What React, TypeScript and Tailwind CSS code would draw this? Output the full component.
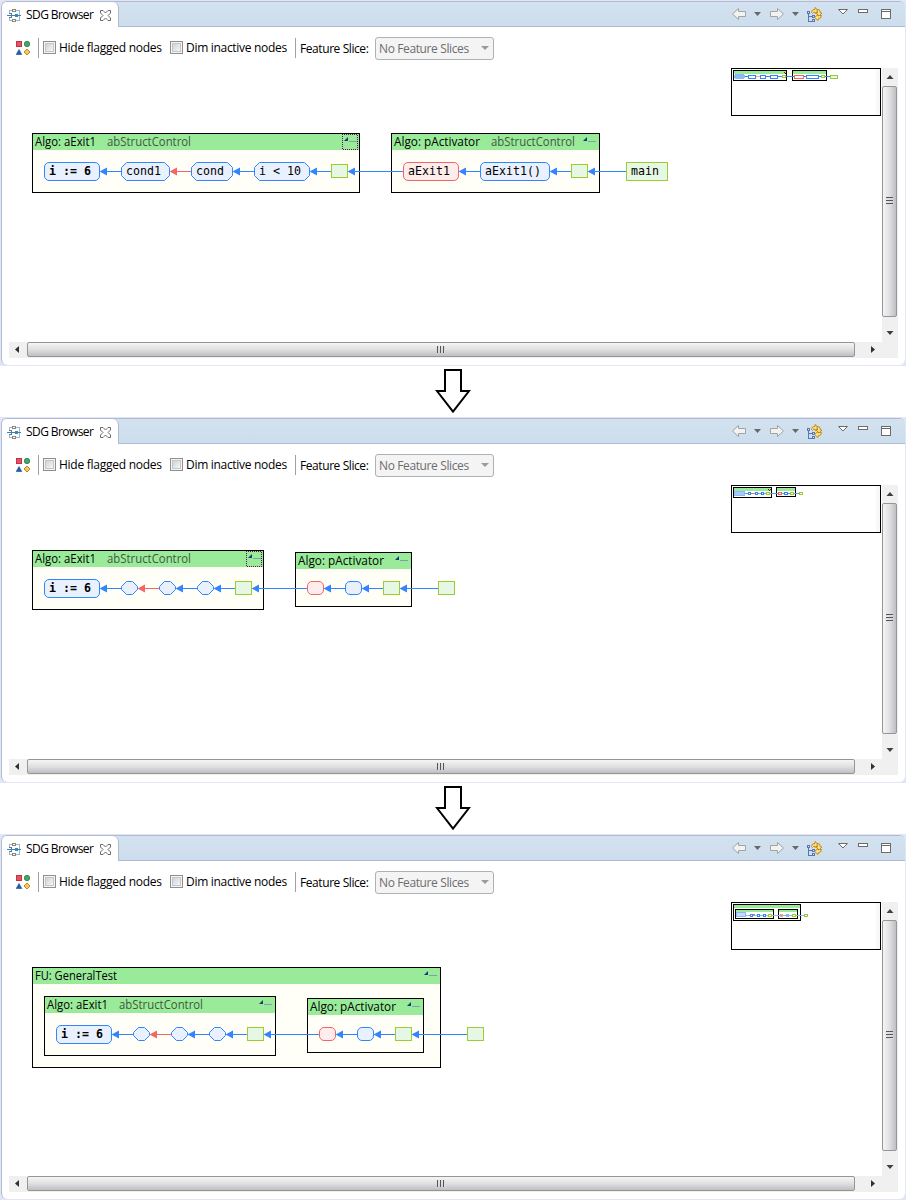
import React from "react";

type Kind = "blue" | "oct" | "red" | "green";
interface NodeDef {
  kind: Kind;
  x: number;
  w: number;
  label?: string;
  bold?: boolean;
}
interface GroupDef {
  x: number;
  y: number;
  w: number;
  h: number;
  title: string;
  titleW: number;
  sub?: boolean;
  focused?: string;
}
interface Scene {
  cy: number;
  groups: GroupDef[];
  nodes: NodeDef[];
  mini: React.ReactNode;
}

const BLUE = "#3385ff";
const RED = "#f26666";
const GREEN = "#9acd32";
const fills = { blue: "#e9f1fe", oct: "#e9f1fe", red: "#ffeced", green: "#e6f8e4" };
const strokes = { blue: BLUE, oct: BLUE, red: RED, green: GREEN };

function Shape({ n, cy }: { n: NodeDef; cy: number }) {
  const h = n.label ? 19 : 14;
  const top = n.label ? cy - 9 : cy - 7;
  const x0 = n.x + 0.5;
  const y0 = top + 0.5;
  const x1 = n.x + n.w - 0.5;
  const y1 = top + h - 0.5;
  const c = 5;
  const paint = { fill: fills[n.kind], stroke: strokes[n.kind] };
  return (
    <g>
      {n.kind === "oct" ? (
        <polygon
          {...paint}
          points={`${x0 + c},${y0} ${x1 - c},${y0} ${x1},${y0 + c} ${x1},${y1 - c} ${x1 - c},${y1} ${x0 + c},${y1} ${x0},${y1 - c} ${x0},${y0 + c}`}
        />
      ) : (
        <rect {...paint} x={x0} y={y0} width={n.w - 1} height={h - 1} rx={n.kind === "green" ? 0 : 4.5} />
      )}
      {n.label && (
        <text
          x={n.x + 5}
          y={cy + 4}
          fontSize={11.6}
          textLength={n.label.length * 7}
          xmlSpace="preserve"
          className={n.bold ? "font-['DejaVu_Sans_Mono',monospace] font-bold" : "font-['DejaVu_Sans_Mono',monospace]"}
        >
          {n.label}
        </text>
      )}
    </g>
  );
}

function Edge({ from, to, cy, color }: { from: number; to: number; cy: number; color: string }) {
  return (
    <g fill={color}>
      <rect x={to + 5} y={cy} width={from - to - 5} height={1} />
      <polygon points={`${to - 0.5},${cy + 0.5} ${to + 7},${cy - 3.4} ${to + 7},${cy + 4.4}`} />
    </g>
  );
}

function Group({ g }: { g: GroupDef }) {
  const r = g.x + g.w;
  const ix = g.focused ? r - 16 : r - 17;
  return (
    <g>
      <rect x={g.x + 0.5} y={g.y + 0.5} width={g.w - 1} height={g.h - 1} fill="#fffff7" stroke="#000" />
      <rect x={g.x + 1} y={g.y + 1} width={g.w - 2} height={16} fill="#99eb99" />
      <text x={g.x + 3} y={g.y + 13} fontSize={12} textLength={g.titleW} lengthAdjust="spacingAndGlyphs">
        {g.title}
      </text>
      {g.sub && (
        <text x={g.x + g.titleW + 14} y={g.y + 13} fontSize={12} fill="#435543" textLength={84} lengthAdjust="spacingAndGlyphs">
          abStructControl
        </text>
      )}
      <polygon points={`${ix},${g.y + 8} ${ix + 4},${g.y + 4} ${ix + 4},${g.y + 8}`} fill="#163b78" />
      <rect x={ix + 5} y={g.y + 8} width={8} height={1} fill="#7f9fb3" />
      {g.focused && (
        <rect
          x={r - 17.5}
          y={g.y + 1.5}
          width={15}
          height={15}
          fill="none"
          stroke={g.focused}
          strokeDasharray="1 1"
          strokeDashoffset={0.5}
          shapeRendering="crispEdges"
        />
      )}
    </g>
  );
}

function Diagram({ scene }: { scene: Scene }) {
  const { cy, nodes, groups, mini } = scene;
  return (
    <svg viewBox="9 68 873 274" className="h-[274px] w-[873px] shrink-0 font-['Open_Sans',sans-serif]">
      {groups.map((g, i) => (
        <Group key={i} g={g} />
      ))}
      {nodes.map((n, i) => (
        <Shape key={i} n={n} cy={cy} />
      ))}
      {nodes.slice(1).map((n, i) => (
        <Edge key={i} from={n.x} to={nodes[i].x + nodes[i].w} cy={cy} color={i === 1 ? RED : BLUE} />
      ))}
      <rect x={731.5} y={68.5} width={149} height={47} fill="#fff" stroke="#000" />
      <rect x={876} y={69} width={4} height={46} fill="#f8f8f8" />
      <g shapeRendering="crispEdges">{mini}</g>
    </svg>
  );
}

function MiniBox({ x, y, w, h, g = 3 }: { x: number; y: number; w: number; h: number; g?: number }) {
  return (
    <>
      <rect x={x + 0.5} y={y + 0.5} width={w - 1} height={h - 1} fill="#fffff7" stroke="#000" />
      <rect x={x + 1} y={y + 1} width={w - 2} height={g} fill="#99eb99" />
    </>
  );
}

function MiniNode({ x, y, w, h = 3, c, f = "#fff" }: { x: number; y: number; w: number; h?: number; c: string; f?: string }) {
  return <rect x={x + 0.5} y={y + 0.5} width={w - 1} height={h - 1} fill={f} stroke={c} />;
}

const miniA = (
  <>
    <MiniBox x={733} y={70} w={54} h={11} />
    <MiniBox x={792} y={70} w={35} h={11} />
    <rect x={784} y={72} width={1} height={1} fill="#808" />
    <rect x={785} y={73} width={1} height={1} fill="#303" />
    <rect x={744} y={76} width={88} height={1} fill={BLUE} />
    <rect x={756} y={76} width={4} height={1} fill="#f9a0a0" />
    <rect x={734} y={75} width={11} height={3} fill="#8db9fb" />
    <rect x={735} y={74} width={9} height={5} fill="#8db9fb" />
    <MiniNode x={748} y={75} w={8} h={4} c={BLUE} />
    <MiniNode x={760} y={75} w={6} h={4} c={BLUE} />
    <MiniNode x={770} y={75} w={8} h={4} c={BLUE} />
    <MiniNode x={782} y={75} w={4} c={GREEN} />
    <MiniNode x={794} y={75} w={10} h={4} c={RED} />
    <MiniNode x={806} y={75} w={13} h={4} c={BLUE} />
    <MiniNode x={821} y={75} w={4} c={GREEN} />
    <MiniNode x={830} y={75} w={8} h={4} c={GREEN} f="#e6f8e4" />
  </>
);

const miniB = (
  <>
    <MiniBox x={733} y={70} w={39} h={11} />
    <MiniBox x={776} y={70} w={20} h={10} />
    <rect x={768} y={72} width={1} height={1} fill="#333" />
    <rect x={770} y={72} width={1} height={1} fill="#333" />
    <rect x={769} y={73} width={1} height={1} fill="#333" />
    <rect x={744} y={76} width={56} height={1} fill="#5d9dfa" />
    <rect x={734.5} y={74.5} width={10} height={4} rx={1} fill="#a5c9ff" stroke="#8db9fb" />
    <MiniNode x={748} y={75} w={3} c={BLUE} />
    <rect x={751} y={76} width={3} height={1} fill={RED} />
    <MiniNode x={755} y={75} w={3} c={BLUE} />
    <MiniNode x={761} y={75} w={3} c={BLUE} />
    <MiniNode x={766} y={75} w={4} c={GREEN} />
    <MiniNode x={778} y={75} w={4} c={RED} />
    <MiniNode x={784} y={75} w={4} c={BLUE} />
    <MiniNode x={790} y={75} w={4} c={GREEN} />
    <MiniNode x={799} y={75} w={4} c={GREEN} />
  </>
);

const miniC = (
  <>
    <MiniBox x={733} y={70} w={68} h={17} />
    <MiniBox x={735} y={75} w={39} h={10} g={2} />
    <MiniBox x={778} y={75} w={20} h={10} g={2} />
    <rect x={745} y={81} width={60} height={1} fill="#86b5fa" />
    <rect x={736.5} y={78.500} width={9} height={4} rx={1} fill="#c5dcff" stroke="#8db9fb" />
    <MiniNode x={750} y={80} w={3} c={BLUE} />
    <rect x={753} y={80} width={2} height={1} fill={RED} />
    <MiniNode x={757} y={80} w={3} c={BLUE} />
    <MiniNode x={763} y={80} w={3} c={BLUE} />
    <MiniNode x={768} y={80} w={4} c={GREEN} />
    <MiniNode x={780} y={80} w={3} c="#f39a9a" f="#f39a9a" />
    <MiniNode x={786} y={80} w={3} c="#86b5fa" f="#86b5fa" />
    <MiniNode x={792} y={80} w={4} c={GREEN} />
    <MiniNode x={804} y={80} w={4} c={GREEN} />
  </>
);

const scenes: Scene[] = [
  {
    cy: 171,
    mini: miniA,
    groups: [
      { x: 32, y: 133, w: 328, h: 60, title: "Algo: aExit1", titleW: 61, sub: true, focused: "#66104f" },
      { x: 391, y: 133, w: 209, h: 60, title: "Algo: pActivator", titleW: 86, sub: true },
    ],
    nodes: [
      { kind: "blue", x: 44, w: 56, label: "i := 6", bold: true },
      { kind: "oct", x: 121, w: 49, label: "cond1" },
      { kind: "oct", x: 191, w: 42, label: "cond" },
      { kind: "oct", x: 254, w: 56, label: "i < 10" },
      { kind: "green", x: 331, w: 17 },
      { kind: "red", x: 403, w: 56, label: "aExit1" },
      { kind: "blue", x: 480, w: 70, label: "aExit1()" },
      { kind: "green", x: 571, w: 17 },
      { kind: "green", x: 626, w: 42, label: "main" },
    ],
  },
  {
    cy: 171,
    mini: miniB,
    groups: [
      { x: 32, y: 133, w: 232, h: 60, title: "Algo: aExit1", titleW: 61, sub: true, focused: "#66104f" },
      { x: 295, y: 135, w: 117, h: 55, title: "Algo: pActivator", titleW: 86 },
    ],
    nodes: [
      { kind: "blue", x: 44, w: 56, label: "i := 6", bold: true },
      { kind: "oct", x: 121, w: 17 },
      { kind: "oct", x: 159, w: 17 },
      { kind: "oct", x: 197, w: 17 },
      { kind: "green", x: 235, w: 17 },
      { kind: "red", x: 307, w: 17 },
      { kind: "blue", x: 345, w: 17 },
      { kind: "green", x: 383, w: 17 },
      { kind: "green", x: 438, w: 17 },
    ],
  },
  {
    cy: 200,
    mini: miniC,
    groups: [
      { x: 32, y: 133, w: 409, h: 101, title: "FU: GeneralTest", titleW: 82 },
      { x: 44, y: 162, w: 232, h: 60, title: "Algo: aExit1", titleW: 61, sub: true },
      { x: 307, y: 164, w: 117, h: 55, title: "Algo: pActivator", titleW: 86 },
    ],
    nodes: [
      { kind: "blue", x: 56, w: 56, label: "i := 6", bold: true },
      { kind: "oct", x: 133, w: 17 },
      { kind: "oct", x: 171, w: 17 },
      { kind: "oct", x: 209, w: 17 },
      { kind: "green", x: 247, w: 17 },
      { kind: "red", x: 319, w: 17 },
      { kind: "blue", x: 357, w: 17 },
      { kind: "green", x: 395, w: 17 },
      { kind: "green", x: 467, w: 17 },
    ],
  },
];

function GraphIcon() {
  return (
    <svg viewBox="0 0 15 13" className="h-[13px] w-[15px] shrink-0" fill="none" shapeRendering="crispEdges">
      <path d="M2.5 4V1.5H5M9 1.5h3.500v10H9M5 11.500H2.500V9" stroke="#a3b4cc" />
      <path d="M2 4.500h3M0 6.500h14M2 8.500h3M4.500 4v5" stroke="#4c7cab" />
      <rect x="5.500" y=".5" width="3" height="2" fill="#fff" stroke="#8d8578" />
      <rect x="5.500" y="10.500" width="3" height="2" fill="#fff" stroke="#8d8578" />
      <rect x="8" y="5" width="3" height="3" fill="#2a8fb8" />
    </svg>
  );
}

function CloseIcon() {
  return (
    <svg viewBox="0 0 11 11" className="h-[11px] w-[11px] shrink-0" fill="#fff" stroke="#686868">
      <path d="M.5.500h2.500l2.500 2.500 2.500-2.500h2.500v2.500l-2.500 2.500 2.500 2.500v2.500h-2.500l-2.500-2.500-2.500 2.500H.500v-2.500l2.500-2.500-2.500-2.500z" />
    </svg>
  );
}

function ShapesIcon() {
  return (
    <svg viewBox="0 0 15 15" className="mt-px h-[15px] w-[15px] shrink-0">
      <rect x=".5" y=".5" width="5" height="5" fill="#e05561" stroke="#c93043" />
      <circle cx="11" cy="3" r="2.700" fill="#4ba367" stroke="#26804a" strokeWidth=".8" />
      <path d="M3 8.500 5.800 13.500H.2z" fill="#1f5fae" stroke="#164b91" strokeWidth=".6" />
      <path d="M11 8l3 3-3 3-3-3z" fill="#fbc65a" stroke="#b8862d" />
    </svg>
  );
}

function HeaderIcons() {
  return (
    <svg viewBox="730 2 166 24" className="mr-[9px] h-6 w-[166px]" fill="none">
      <g fill="#f2f2f0" stroke="#a3a3a3">
        <path d="M732.500 14l6-5.500v3h7v5h-7v3z" />
        <path d="M783.500 14l-6-5.500v3h-7v5h7v3z" />
      </g>
      <path d="M754 12h7l-3.500 4zM792 12h7l-3.500 4z" fill="#686868" />
      <g shapeRendering="crispEdges" stroke="#5478b5">
        <path d="M808.500 14v7.500h4M808.500 16.500h4" />
        <rect x="807.500" y="11.500" width="2" height="2" fill="#dce8f8" />
        <rect x="812.500" y="15.500" width="2" height="2" fill="#dce8f8" />
        <rect x="812.500" y="19.500" width="2" height="2" fill="#dce8f8" />
      </g>
      <g fill="#ffe27a" stroke="#b9831b" strokeWidth=".9" strokeLinejoin="round">
        <path d="M811.500 12.500l1-2.500 2.500-.5V7.500l3.500 3-3.500 3V12l-1.500.500-1 1z" />
        <path d="M817 9.500l2.500.5 1 3h1.500l-3 3-3-3h1.500z" />
        <path d="M821.500 15.500l-1 2.500-2.500 1v1.500l-3.500-3 3.500-3v1.500l1.500-.5z" />
      </g>
      <path d="M838.500 9.500h9l-4.500 4.500z" fill="#fff" stroke="#6b6b6b" />
      <rect x="858.500" y="9.500" width="9" height="3" fill="#fff" stroke="#6b6b6b" />
      <rect x="881.500" y="9.500" width="9" height="9" fill="#fff" stroke="#6b6b6b" />
      <path d="M881 11.500h10" stroke="#6b6b6b" />
    </svg>
  );
}

function Check() {
  return (
    <span className="flex h-[13px] w-[13px] shrink-0 border border-[#8e8f8f] bg-[#f4f4f4] p-px">
      <span className="flex-1 border border-[#c3c7ca] bg-linear-to-br from-[#cfd3d7] to-[#f6f6f6]" />
    </span>
  );
}

function Panel({ scene }: { scene: Scene }) {
  return (
    <section className="h-[366px] w-[906px] shrink-0 bg-[#e1e6f6] p-px">
      <div className="flex h-[364px] flex-col overflow-hidden rounded-[6px] border-t border-l border-[#b3b8d3] bg-white">
        <header className="flex h-[25px] shrink-0 items-stretch justify-between border-b border-[#b3b8d3] bg-linear-to-b from-[#d3e2ef] to-[#ccdded]">
          <div className="-mb-px flex h-[25px] w-[117px] items-center rounded-tr-[6px] border-r border-[#b3b8d3] bg-white pt-px pl-[5px]">
            <GraphIcon />
            <span className="ml-[4px] w-[68px] text-[12px] leading-[16px] tracking-[-0.58px] whitespace-nowrap">SDG Browser</span>
            <span className="ml-[6px] flex">
              <CloseIcon />
            </span>
          </div>
          <HeaderIcons />
        </header>
        <div className="flex h-[41px] shrink-0 items-center pl-[14px] text-[12px] leading-[16px] whitespace-nowrap">
          <ShapesIcon />
          <span className="mr-[4px] ml-[7px] h-5 w-px bg-[#a0a0a0]" />
          <Check />
          <span className="ml-[3px] w-[111px] pt-px tracking-[-0.26px]">Hide flagged nodes</span>
          <Check />
          <span className="ml-[3px] w-[109px] pt-px tracking-[-0.3px]">Dim inactive nodes</span>
          <span className="h-5 w-px bg-[#a0a0a0]" />
          <span className="ml-[4px] w-[75px] pt-[2px] tracking-[-0.42px]">Feature Slice:</span>
          <div className="mt-px flex h-[23px] w-[119px] items-center justify-between rounded-[3px] border border-[#adb2b5] bg-[#f4f4f4] pr-[4px] pl-[3px] text-[#6d6d6d]">
            <span className="pt-px tracking-[-0.38px]">No Feature Slices</span>
            <svg viewBox="0 0 8 4" className="h-1 w-2" fill="#9a9a9a">
              <path d="M0 0h8L4 4z" />
            </svg>
          </div>
        </div>
        <div className="flex h-[274px] shrink-0 pl-[7px]">
          <Diagram scene={scene} />
          <div className="flex h-[274px] w-4 flex-col items-start bg-[#f0f0f0]">
            <svg viewBox="0 0 16 18" className="h-[18px] w-4 shrink-0" fill="#404040">
              <path d="M4.500 11h7L8 7z" />
            </svg>
            <div className="flex h-[231px] w-[15px] shrink-0 flex-col items-center justify-center gap-px rounded-[2px] border border-[#959595] bg-linear-to-r from-[#f5f5f5] via-[#e0e0e2] to-[#bfbfc3] pb-0.5">
              <span className="h-0.5 w-[7px] border-b border-[#ddd] bg-[#555]" />
              <span className="h-0.5 w-[7px] border-b border-[#ddd] bg-[#555]" />
              <span className="h-0.5 w-[7px] border-b border-[#ddd] bg-[#555]" />
            </div>
            <svg viewBox="0 0 16 25" className="h-[25px] w-4 shrink-0" fill="#404040">
              <path d="M4.500 14h7L8 18z" />
            </svg>
          </div>
        </div>
        <div className="ml-[7px] flex h-4 w-[889px] shrink-0 items-start bg-[#f0f0f0]">
          <svg viewBox="0 0 18 16" className="h-4 w-[18px] shrink-0" fill="#303030">
            <path d="M10 4v7L6 7.500z" />
          </svg>
          <div className="flex h-[15px] w-[828px] shrink-0 items-center justify-center gap-px rounded-[2px] border border-[#959595] bg-linear-to-b from-[#f5f5f5] via-[#e0e0e2] to-[#bfbfc3]">
            <span className="h-[7px] w-0.5 border-r border-[#ddd] bg-[#555]" />
            <span className="h-[7px] w-0.5 border-r border-[#ddd] bg-[#555]" />
            <span className="h-[7px] w-0.5 border-r border-[#ddd] bg-[#555]" />
          </div>
          <svg viewBox="0 0 27 16" className="h-4 w-[27px] shrink-0" fill="#303030">
            <path d="M16 4v7l4-3.500z" />
          </svg>
        </div>
      </div>
    </section>
  );
}

function DownArrow() {
  return (
    <div className="flex h-[51px] w-[906px] shrink-0 justify-center bg-white">
      <svg viewBox="435 366 36 51" className="h-[51px] w-9" fill="#fff" stroke="#000" strokeWidth="2">
        <path d="M445 370h16v21h8l-16 20.500L437 391h8z" />
      </svg>
    </div>
  );
}

export default function App() {
  return (
    <main className="flex h-[1200px] w-[906px] flex-col overflow-hidden bg-white font-['Open_Sans',sans-serif] text-black">
      <Panel scene={scenes[0]} />
      <DownArrow />
      <Panel scene={scenes[1]} />
      <DownArrow />
      <Panel scene={scenes[2]} />
    </main>
  );
}
